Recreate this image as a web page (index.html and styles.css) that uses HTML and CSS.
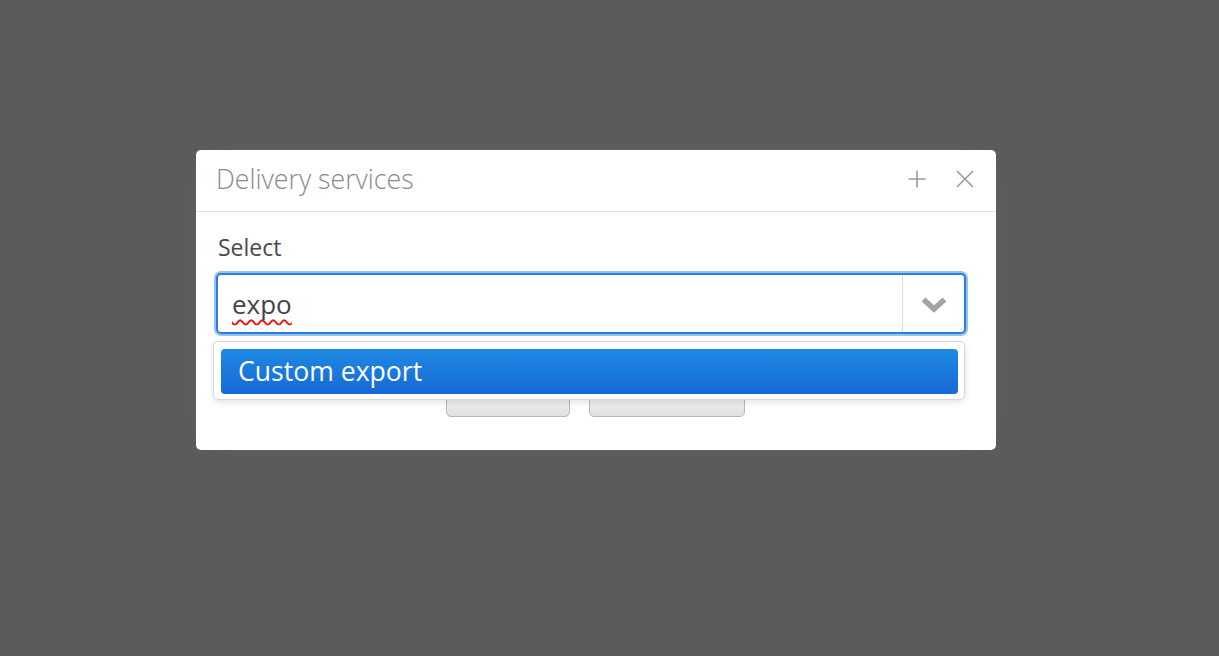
FILE: index.html
```html
<!DOCTYPE html>
<html>
<head>
<meta charset="utf-8">
<link rel="stylesheet" href="styles.css">
</head>
<body>
<div class="overlay">
  <div class="dialog">
    <div class="dialog-header">
      <div class="dialog-title">Delivery services</div>
      <div class="dialog-actions">
        <svg class="icon" width="18" height="18" viewBox="0 0 18 18"><path d="M9 0.5V17.5M0.5 9H17.5" stroke="#9a9a9a" stroke-width="1.6" fill="none"/></svg>
        <svg class="icon" width="18" height="18" viewBox="0 0 18 18"><path d="M1 1L17 17M17 1L1 17" stroke="#9a9a9a" stroke-width="1.6" fill="none"/></svg>
      </div>
    </div>
    <div class="dialog-body">
      <div class="field-label">Select</div>
      <div class="combo">
        <div class="combo-box">
          <div class="combo-input"><span class="typed">expo</span></div>
          <div class="combo-toggle">
            <svg width="26" height="16" viewBox="0 0 26 16"><path d="M2.5 2.5L13 12L23.5 2.5" stroke="#a3a3a3" stroke-width="5.5" fill="none"/></svg>
          </div>
        </div>
        <div class="combo-list">
          <div class="combo-item">Custom export</div>
        </div>
      </div>
      <div class="button-row">
        <div class="btn btn-ok">OK</div>
        <div class="btn btn-cancel">Cancel</div>
      </div>
    </div>
  </div>
</div>
</body>
</html>
```

FILE: styles.css
```css
html, body {
  margin: 0;
  padding: 0;
  height: 100%;
}
body {
  background: #5a5a5a;
  font-family: "Open Sans", "Liberation Sans", sans-serif;
  overflow: hidden;
}
.overlay {
  padding: 150px 0 0 196px;
}
.dialog {
  width: 800px;
  height: 300px;
  background: #fff;
  border-radius: 5px;
  box-shadow: 0 0 60px 20px rgba(255,255,255,0.025);
  box-sizing: border-box;
}
.dialog-header {
  height: 62px;
  box-sizing: border-box;
  border-bottom: 1px solid #e2e2e2;
  display: flex;
  align-items: center;
  justify-content: space-between;
  padding: 0 22px 0 20px;
}
.dialog-title {
  font-size: 26.7px;
  font-weight: 300;
  color: #8a8a8a;
  line-height: 1;
  margin-top: -2px;
}
.dialog-actions {
  display: flex;
  align-items: center;
  gap: 30px;
  margin-top: -4px;
}
.icon {
  display: block;
}
.dialog-body {
  padding: 22px 30px 0 20px;
}
.field-label {
  font-size: 23px;
  line-height: 27px;
  color: #4a4a4a;
  padding-left: 2px;
}
.combo {
  position: relative;
  margin-top: 12px;
}
.combo-box {
  height: 61px;
  box-sizing: border-box;
  border: 2px solid #2a7fdc;
  border-radius: 5px;
  box-shadow: 0 0 0 2px #93c3f1;
  display: flex;
  background: #fff;
}
.combo-input {
  flex: 1;
  display: flex;
  align-items: center;
  padding-left: 14px;
  font-size: 26px;
  color: #444;
}
.typed {
  text-decoration: underline wavy #f01010;
  text-decoration-thickness: 1.6px;
  text-underline-offset: 5px;
  text-decoration-skip-ink: none;
}
.combo-toggle {
  width: 62px;
  border-left: 1px solid #dcdcdc;
  display: flex;
  align-items: center;
  justify-content: center;
  padding-top: 2px;
  box-sizing: border-box;
}
.combo-list {
  position: absolute;
  left: -3px;
  right: 1px;
  top: 68px;
  background: #fff;
  border: 1px solid #d8d8d8;
  border-radius: 5px;
  box-shadow: 0 2px 6px rgba(0,0,0,0.12);
  padding: 7px 6px 5px 7px;
  z-index: 2;
}
.combo-item {
  height: 45px;
  border-radius: 4px;
  background: linear-gradient(#1f89e4, #1669d5);
  color: #fff;
  font-size: 26.6px;
  line-height: 44px;
  padding-left: 17px;
  box-sizing: border-box;
}
.button-row {
  display: flex;
  justify-content: center;
  gap: 19px;
  margin-top: 36px;
  padding-left: 8px;
}
.btn {
  height: 47px;
  box-sizing: border-box;
  border: 1px solid #b8b8b8;
  border-radius: 5px;
  background: linear-gradient(#f4f4f4 0%, #f0f0f0 60%, #e0e0e0 100%);
  font-size: 16px;
  line-height: 34px;
  text-align: center;
  color: #444;
}
.btn-ok { width: 124px; }
.btn-cancel { width: 156px; }
```
